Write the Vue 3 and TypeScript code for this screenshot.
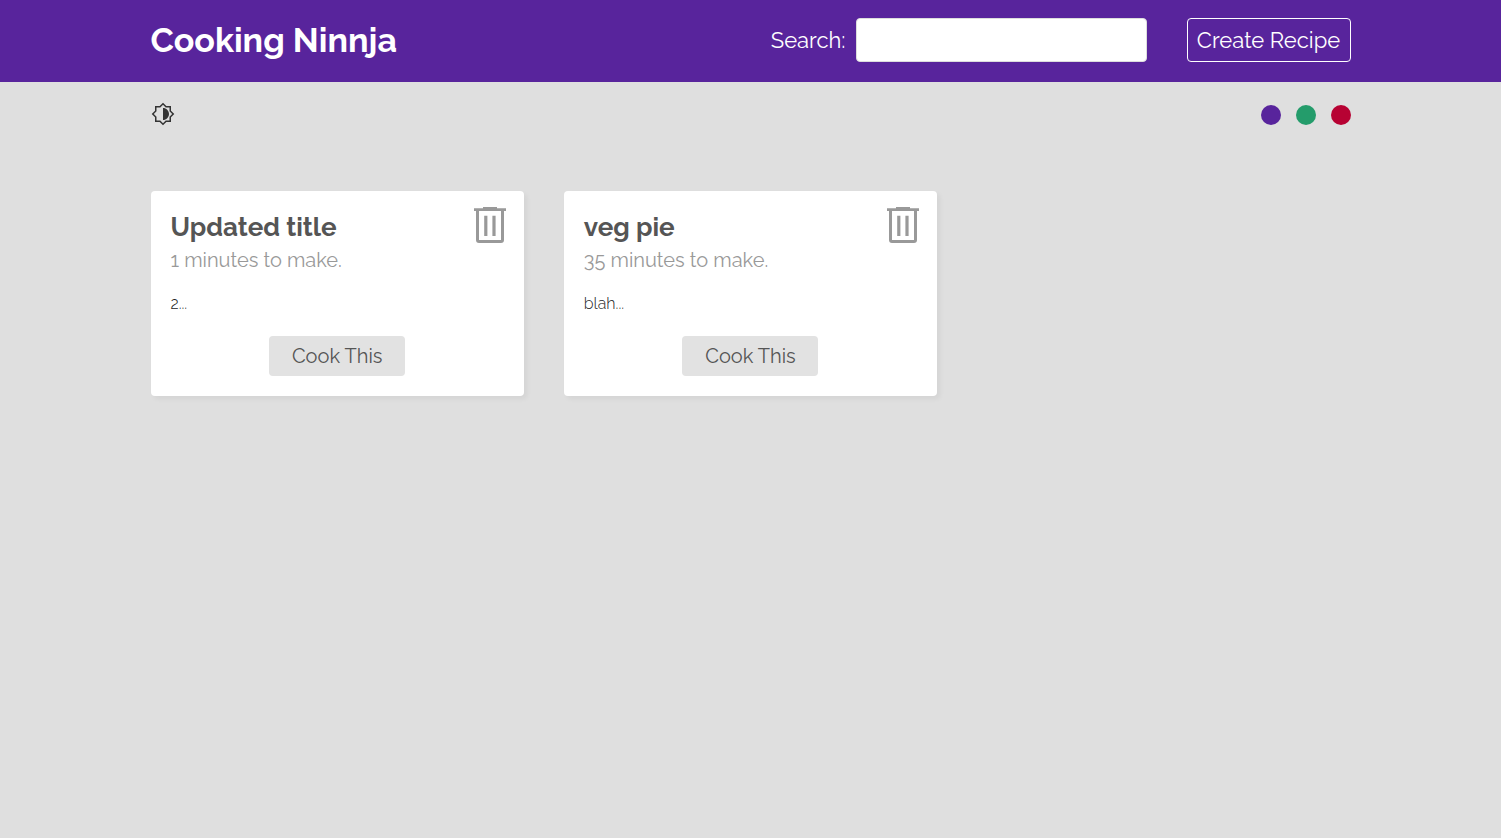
<script setup lang="ts">
import { ref } from 'vue'

interface Recipe {
  id: number
  title: string
  minutes: number
  method: string
}

const themes = [
  { name: 'Purple', color: '#58249c' },
  { name: 'Green', color: '#249c6b' },
  { name: 'Red', color: '#b70233' },
]

const themeColor = ref(themes[0].color)
const term = ref('')
const recipes = ref<Recipe[]>([
  { id: 1, title: 'Updated title', minutes: 1, method: '2' },
  { id: 2, title: 'veg pie', minutes: 35, method: 'blah' },
])

function removeRecipe(id: number) {
  recipes.value = recipes.value.filter((r) => r.id !== id)
}
</script>

<template>
  <header class="navbar" :style="{ background: themeColor }">
    <nav class="container nav">
      <a class="brand" href="#"><h1>Cooking Ninnja</h1></a>
      <form class="search" @submit.prevent>
        <label for="search">Search:</label>
        <input id="search" v-model="term" type="text" required />
      </form>
      <a class="create" href="#create">Create Recipe</a>
    </nav>
  </header>

  <div class="container selector">
    <button class="mode" type="button" aria-label="Toggle dark mode">
      <svg viewBox="0 0 24 24" width="24" height="24" aria-hidden="true">
        <path
          d="M20 8.69V4h-4.69L12 .69 8.69 4H4v4.69L.69 12 4 15.31V20h4.69L12 23.31 15.31 20H20v-4.69L23.31 12 20 8.69zm-1.5 5.99V18.5h-3.8L12 21.2 9.3 18.5H5.5v-3.8L2.8 12 5.5 9.3V5.5h3.8L12 2.8 14.7 5.5h3.8v3.8L21.2 12 18.5 14.68zM12 6v12c3.31 0 6-2.69 6-6s-2.69-6-6-6z"
        />
      </svg>
    </button>
    <div class="themes">
      <button
        v-for="t in themes"
        :key="t.name"
        class="dot"
        type="button"
        :aria-label="t.name"
        :style="{ background: t.color }"
        @click="themeColor = t.color"
      ></button>
    </div>
  </div>

  <main class="container grid">
    <article v-for="r in recipes" :key="r.id" class="card">
      <h3>{{ r.title }}</h3>
      <p class="time">{{ r.minutes }} minutes to make.</p>
      <div class="method">{{ r.method }}...</div>
      <a class="cook" :href="'#recipe-' + r.id">Cook This</a>
      <button class="delete" type="button" aria-label="Delete recipe" @click="removeRecipe(r.id)">
        <svg viewBox="0 0 32 36" width="32" height="36" aria-hidden="true">
          <path d="M9 0h14v2H9zM0 1.2h32V4H0z" />
          <path
            fill-rule="evenodd"
            d="M2 3h28v30q0 3-3 3H5q-3 0-3-3zM5 4v29h22V4z"
          />
          <path d="M10.2 8.8h3.2v20.2h-3.2zM18.4 8.8h3.2v20.2h-3.2z" />
        </svg>
      </button>
    </article>
  </main>
</template>

<style>
body {
  margin: 0;
  background: #dfdfdf;
}
</style>

<style scoped>
.navbar,
.selector,
.grid {
  font-family: Raleway, Lato, sans-serif;
}
.container {
  box-sizing: border-box;
  width: 100%;
  max-width: 1200px;
  margin: 0 auto;
}
.navbar {
  padding: 18px 0 20px;
  color: #fff;
}
.nav {
  display: flex;
  align-items: center;
}
.brand {
  margin-right: auto;
  color: inherit;
  text-decoration: none;
}
h1 {
  margin: 0;
  font-size: 34px;
  line-height: 44px;
  font-weight: 700;
}
.search {
  display: flex;
  align-items: center;
  gap: 10px;
  font-size: 22px;
}
.search input {
  box-sizing: border-box;
  width: 291px;
  height: 44px;
  padding: 8px;
  border: 1px solid #ddd;
  border-radius: 4px;
  background: #fff;
  font: inherit;
}
.create {
  box-sizing: border-box;
  margin-left: 40px;
  width: 164px;
  border: 1px solid #fff;
  border-radius: 4px;
  color: #fff;
  font-size: 22px;
  line-height: 42px;
  text-align: center;
  text-decoration: none;
}
.selector {
  display: flex;
  justify-content: space-between;
  padding: 20px 0 0;
}
button {
  padding: 0;
  border: 0;
  background: none;
  cursor: pointer;
}
svg {
  display: block;
}
.mode {
  fill: #333;
}
.themes {
  display: flex;
  align-items: flex-end;
  gap: 15px;
  height: 23px;
}
.dot {
  width: 20px;
  height: 20px;
  border-radius: 50%;
}
.grid {
  display: grid;
  grid-template-columns: repeat(3, 1fr);
  gap: 40px;
  padding: 65px 0 40px;
}
.card {
  position: relative;
  display: flex;
  flex-direction: column;
  padding: 20px;
  border-radius: 4px;
  background: #fff;
  color: #555;
  box-shadow: 3px 3px 5px rgba(0, 0, 0, 0.05);
}
h3 {
  margin: 0;
  font-size: 26px;
  line-height: 32px;
  font-weight: 700;
}
.time {
  margin: 5px 0 0;
  color: #999;
  font-size: 20px;
  line-height: 24px;
}
.method {
  margin: 20px 0;
  color: #222;
  font-size: 16px;
  font-weight: 300;
  line-height: 24px;
}
.cook {
  align-self: center;
  width: 136px;
  border-radius: 4px;
  background: #e2e2e2;
  color: #555;
  font-size: 20px;
  line-height: 40px;
  text-align: center;
  text-decoration: none;
}
.delete {
  position: absolute;
  top: 16px;
  right: 18px;
  fill: #999;
}
</style>
